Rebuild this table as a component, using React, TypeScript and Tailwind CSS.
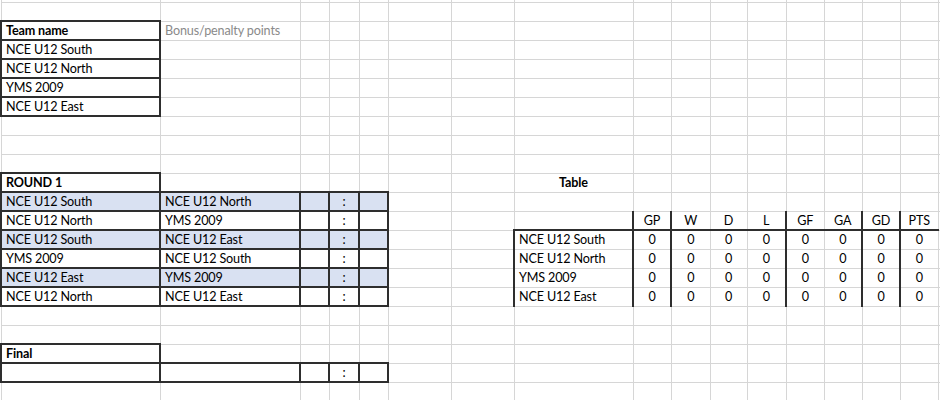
import React from "react";

type C = {
  t?: string;
  b?: boolean;
  center?: boolean;
  gray?: boolean;
  bg?: boolean;
  T?: boolean;
  R?: boolean;
  B?: boolean;
  L?: boolean;
};

const W = [159, 140, 29, 30, 29, 63, 63, 119, 38, 39, 37, 39, 38, 38, 38, 38, 40];
const NR = 21;

function build(): C[][] {
  const rows: C[][] = Array.from({ length: NR }, () => Array.from({ length: W.length }, () => ({} as C)));
  const box = (r: number, c: number, extra: C = {}) =>
    Object.assign(rows[r][c], { T: true, R: true, B: true, L: true }, extra);

  box(1, 0, { t: "Team name", b: true });
  rows[1][1] = { t: "Bonus/penalty points", gray: true };
  ["NCE U12 South", "NCE U12 North", "YMS 2009", "NCE U12 East"].forEach((t, i) => box(2 + i, 0, { t }));

  box(9, 0, { t: "ROUND 1", b: true });
  rows[9][7] = { t: "Table", b: true, center: true };

  const matches = [
    ["NCE U12 South", "NCE U12 North"],
    ["NCE U12 North", "YMS 2009"],
    ["NCE U12 South", "NCE U12 East"],
    ["YMS 2009", "NCE U12 South"],
    ["NCE U12 East", "YMS 2009"],
    ["NCE U12 North", "NCE U12 East"],
  ];
  matches.forEach(([a, h], i) => {
    const r = 10 + i;
    const bg = i % 2 === 0;
    box(r, 0, { t: a, bg });
    box(r, 1, { t: h, bg });
    box(r, 2, { bg });
    box(r, 3, { t: ":", center: true, bg });
    box(r, 4, { bg });
  });

  const heads = ["GP", "W", "D", "L", "GF", "GA", "GD", "PTS"];
  heads.forEach((h, i) => {
    rows[11][8 + i] = { t: h, center: true, B: true };
  });
  rows[11][7] = { B: true };
  ["NCE U12 South", "NCE U12 North", "YMS 2009", "NCE U12 East"].forEach((t, i) => {
    const r = 12 + i;
    rows[r][7] = { t, L: true };
    heads.forEach((_, j) => {
      rows[r][8 + j] = { t: "0", center: true };
    });
  });
  for (let r = 11; r <= 15; r++) {
    [8, 9, 12, 14, 15].forEach((c) => {
      rows[r][c].L = true;
    });
  }

  box(18, 0, { t: "Final", b: true });
  for (let c = 0; c < 5; c++) box(19, c, c === 3 ? { t: ":", center: true } : {});
  return rows;
}

const rows = build();

function Cell({ c }: { c: C }) {
  const cls = [
    "p-0 h-[19px] overflow-hidden whitespace-nowrap align-middle leading-[17px] text-[12.6px] tracking-[-0.15px]",
    c.T ? "border-t-2 border-t-[#2e2e2e]" : "border-t border-t-[#d6d6d6]",
    c.R ? "border-r-2 border-r-[#2e2e2e]" : "border-r border-r-[#d6d6d6]",
    c.B ? "border-b-2 border-b-[#2e2e2e]" : "border-b border-b-[#d6d6d6]",
    c.L ? "border-l-2 border-l-[#2e2e2e]" : "border-l border-l-[#d6d6d6]",
    c.bg ? "bg-[#d9e1f2]" : "bg-white",
    c.b ? "font-bold" : "font-normal",
    c.center ? "text-center" : "text-left pl-[4px]",
    c.gray ? "text-[#8a8a8a]" : "text-black",
  ].join(" ");
  return <td className={cls}>{c.t ?? ""}</td>;
}

export default function App() {
  return (
    <div className="w-[940px] h-[400px] overflow-hidden bg-white font-[Lato,sans-serif]">
      <table className="border-collapse table-fixed w-[977px]">
        <colgroup>
          {W.map((w, i) => (
            <col key={i} style={{ width: w }} />
          ))}
        </colgroup>
        <tbody>
          <tr className="h-[2px]">
            {W.map((_, i) => (
              <td key={i} className="p-0 h-[2px] border-x border-x-[#d6d6d6] border-b border-b-[#d6d6d6]" />
            ))}
          </tr>
          {rows.map((row, r) => (
            <tr key={r} className="h-[19px]">
              {row.map((c, i) => (
                <Cell key={i} c={c} />
              ))}
            </tr>
          ))}
        </tbody>
      </table>
    </div>
  );
}
